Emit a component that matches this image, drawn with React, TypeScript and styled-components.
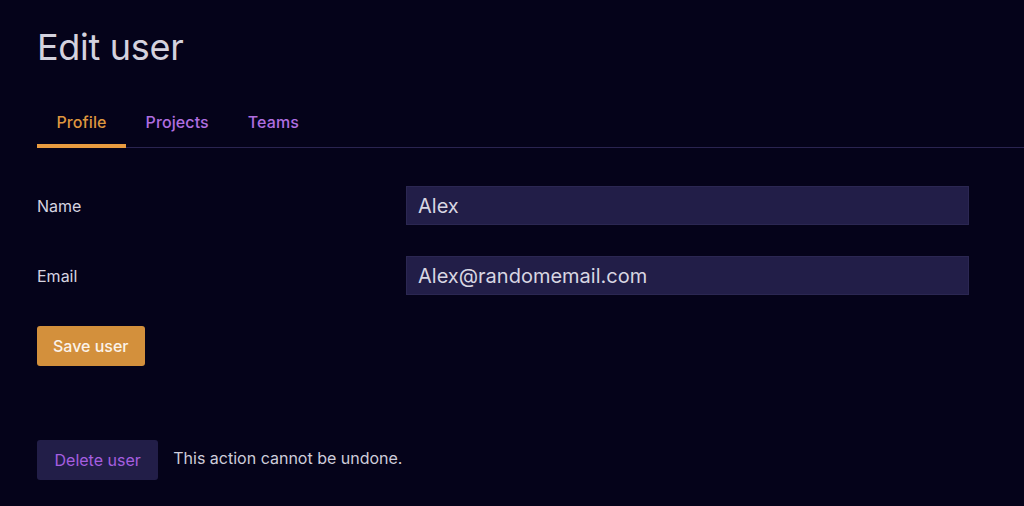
import styled, { createGlobalStyle } from 'styled-components';

type Tab = { title: string; active?: boolean };
type Field = { label: string; value: string };

const tabs: Tab[] = [
  { title: 'Profile', active: true },
  { title: 'Projects' },
  { title: 'Teams' },
];

const fields: Field[] = [
  { label: 'Name', value: 'Alex' },
  { label: 'Email', value: 'Alex@randomemail.com' },
];

const GlobalStyle = createGlobalStyle`
  html, body {
    margin: 0;
    padding: 0;
    background: #05031a;
  }
  body {
    font-family: Inter, "Noto Sans", "Liberation Sans", sans-serif;
    color: #d6d4e0;
  }
`;

export default function App() {
  return (
    <>
      <GlobalStyle />
      <Page>
        <Title>Edit user</Title>
        <TabList>
          {tabs.map((tab) => (
            <TabItem key={tab.title} $active={!!tab.active}>
              {tab.title}
            </TabItem>
          ))}
        </TabList>
        <Form>
          {fields.map((field) => (
            <FieldRow key={field.label}>
              <Label>{field.label}</Label>
              <Input defaultValue={field.value} />
            </FieldRow>
          ))}
          <SaveButton>Save user</SaveButton>
        </Form>
        <DangerRow>
          <DeleteButton>Delete user</DeleteButton>
          <Warning>This action cannot be undone.</Warning>
        </DangerRow>
      </Page>
    </>
  );
}

const Page = styled.div`
  height: 506px;
  padding: 27px 0 0 37px;
  box-sizing: border-box;
  overflow: hidden;
`;

const Title = styled.h1`
  margin: 0;
  font-size: 36px;
  font-weight: 400;
  line-height: 40px;
  color: #d4d2de;
  letter-spacing: -0.3px;
`;

const TabList = styled.div`
  display: flex;
  margin-top: 36px;
  border-bottom: 1px solid #2a2450;
`;

const TabItem = styled.div<{ $active: boolean }>`
  padding: 9px 19.5px 12px;
  font-size: 16px;
  line-height: 20px;
  font-weight: 500;
  letter-spacing: 0.1px;
  color: ${({ $active }) => ($active ? '#df973f' : '#b06ee0')};
  border-bottom: 4px solid ${({ $active }) => ($active ? '#e99c40' : 'transparent')};
  margin-bottom: -1px;
`;

const Form = styled.div`
  display: flex;
  flex-direction: column;
  align-items: flex-start;
  gap: 31px;
  margin-top: 38px;
`;

const FieldRow = styled.div`
  display: grid;
  grid-template-columns: 369px 563px;
  align-items: center;
`;

const Label = styled.label`
  font-size: 16px;
  color: #d6d4e0;
`;

const Input = styled.input`
  box-sizing: border-box;
  width: 100%;
  height: 39px;
  padding: 0 11px;
  background: #221e48;
  border: 1px solid #2b2752;
  color: #d8d6e2;
  font-family: inherit;
  font-size: 20px;
  outline: none;
`;

const SaveButton = styled.button`
  height: 40px;
  padding: 0 16px;
  border: none;
  border-radius: 3px;
  background: #d3903c;
  color: #fbf3ea;
  font-family: inherit;
  font-size: 16px;
  font-weight: 500;
`;

const DangerRow = styled.div`
  display: flex;
  align-items: center;
  gap: 15px;
  margin-top: 74px;
`;

const DeleteButton = styled.button`
  height: 40px;
  padding: 0 17.5px;
  border: none;
  border-radius: 3px;
  background: #221e48;
  color: #a65ee0;
  font-family: inherit;
  font-size: 16px;
  font-weight: 400;
`;

const Warning = styled.p`
  margin: 0 0 4px;
  font-size: 16px;
  color: #cfcddb;
`;
